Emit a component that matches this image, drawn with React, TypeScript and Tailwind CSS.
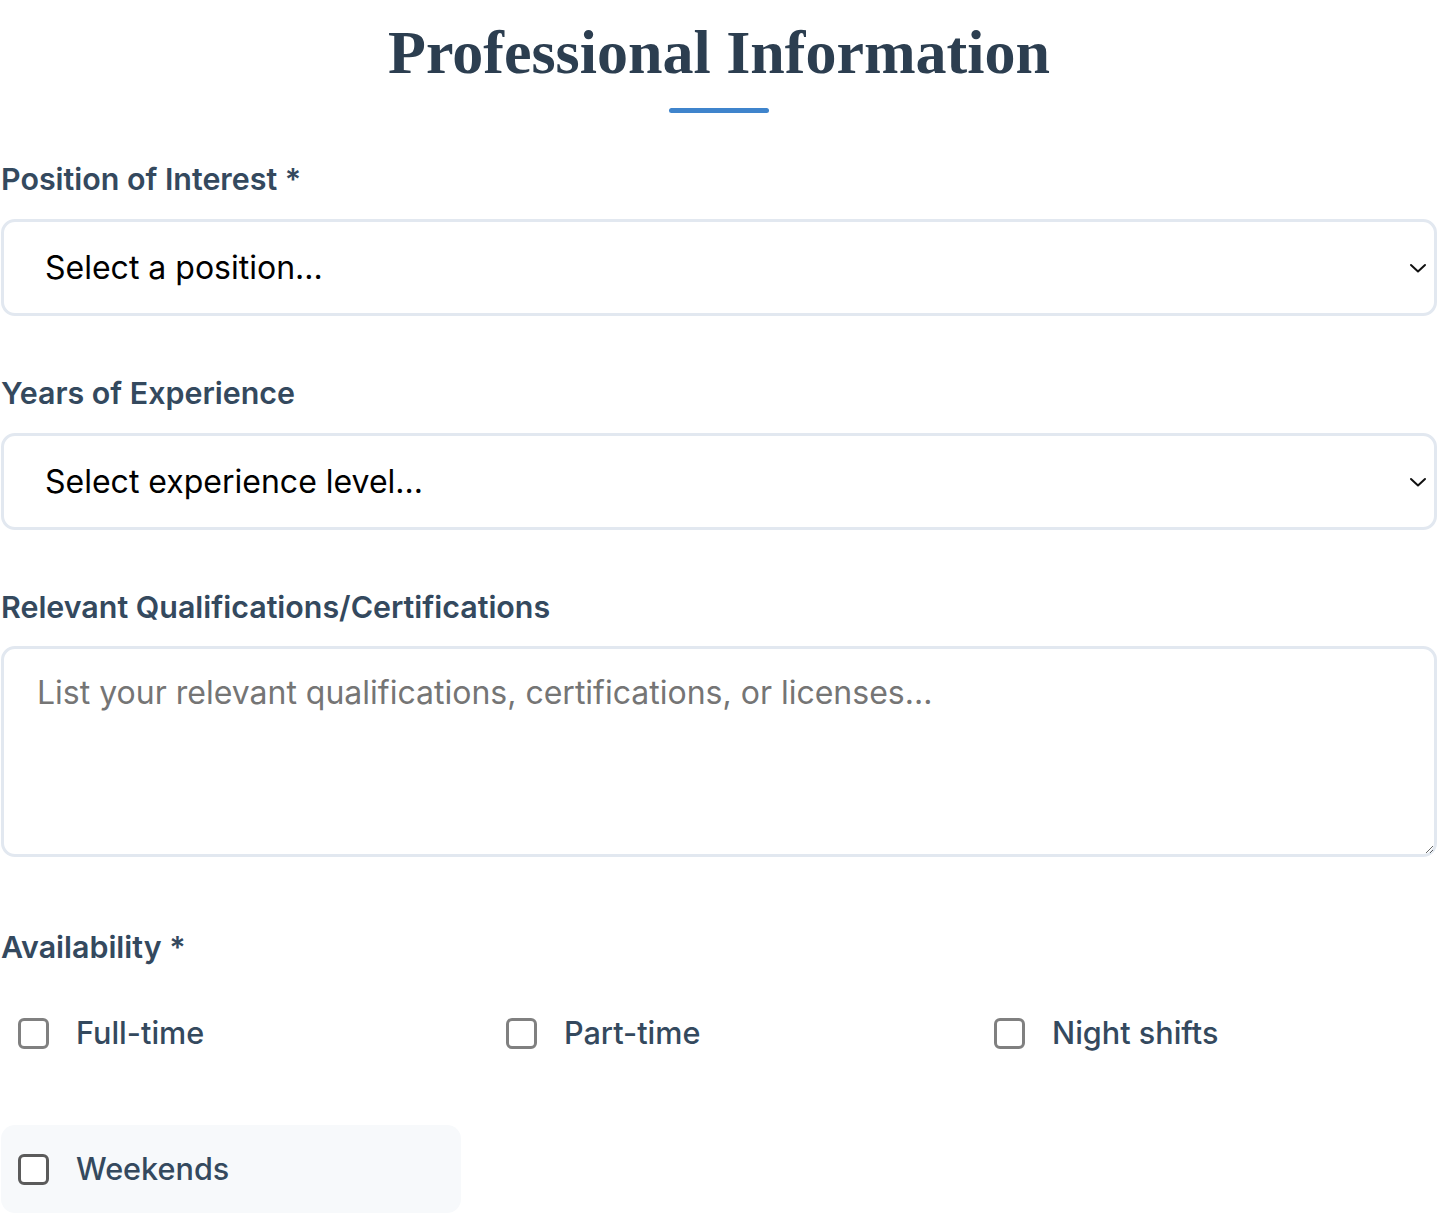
const Chevron = () => (
  <svg width="18" height="10" viewBox="0 0 18 10" fill="none" className="shrink-0">
    <path d="M2 2l7 6.5L16 2" stroke="#111" strokeWidth="2" strokeLinecap="round" strokeLinejoin="round" />
  </svg>
);

const FakeSelect = ({ text }: { text: string }) => (
  <div className="flex h-[97px] items-center justify-between rounded-[14px] border-[3px] border-[#e2e8f0] bg-white pl-[41px] pr-[7px]">
    <span className="text-[32px] text-black">{text}</span>
    <Chevron />
  </div>
);

const Box = ({ dark }: { dark?: boolean }) => (
  <span
    className={
      dark
        ? 'block h-[31px] w-[31px] shrink-0 rounded-[6px] border-[3px] border-[#5b5b5b] bg-white'
        : 'block h-[31px] w-[31px] shrink-0 rounded-[6px] border-[3px] border-[#808080] bg-white'
    }
  />
);

const options = ['Full-time', 'Part-time', 'Night shifts', 'Weekends'];

const App = () => {
  return (
    <div className="w-[1438px] bg-white px-px font-['Inter','Liberation_Sans',sans-serif] text-[#34495e]">
      <h1 className="pt-[17px] text-center font-['Liberation_Serif',serif] text-[62px] font-bold leading-[70px] text-[#2c3e50]">
        Professional Information
      </h1>
      <div className="mx-auto mt-[21px] h-[5px] w-[100px] rounded-full bg-[#3f84cc]" />

      <div className="mt-[45px]">
        <label className="block text-[30.4px] font-semibold leading-[42px]">Position of Interest *</label>
        <div className="mt-[19px]">
          <FakeSelect text="Select a position..." />
        </div>
      </div>

      <div className="mt-[56px]">
        <label className="block text-[30.4px] font-semibold leading-[42px]">Years of Experience</label>
        <div className="mt-[19px]">
          <FakeSelect text="Select experience level..." />
        </div>
      </div>

      <div className="mt-[56px]">
        <label className="block text-[30.4px] font-semibold leading-[42px]">Relevant Qualifications/Certifications</label>
        <textarea
          readOnly
          placeholder="List your relevant qualifications, certifications, or licenses..."
          className="mt-[18px] block h-[211px] w-full rounded-[14px] border-[3px] border-[#e2e8f0] bg-white px-[33px] py-[23px] text-[32px] leading-[42px] text-black outline-none placeholder:text-[#757575]"
        />
      </div>

      <div className="mt-[69px]">
        <label className="block text-[30.4px] font-semibold leading-[42px]">Availability *</label>
        <div className="mt-[21px] grid grid-cols-3 gap-x-[28px] gap-y-[48px]">
          {options.map((o, i) => (
            <div
              key={o}
              className={
                i === 3
                  ? 'flex h-[88px] items-center gap-[27px] rounded-[14px] bg-[#f7f9fb] px-[17px]'
                  : 'flex h-[88px] items-center gap-[27px] rounded-[14px] px-[17px]'
              }
            >
              <Box dark={i === 3} />
              <span className="text-[30.6px] font-medium">{o}</span>
            </div>
          ))}
        </div>
      </div>
    </div>
  );
};

export default App;
